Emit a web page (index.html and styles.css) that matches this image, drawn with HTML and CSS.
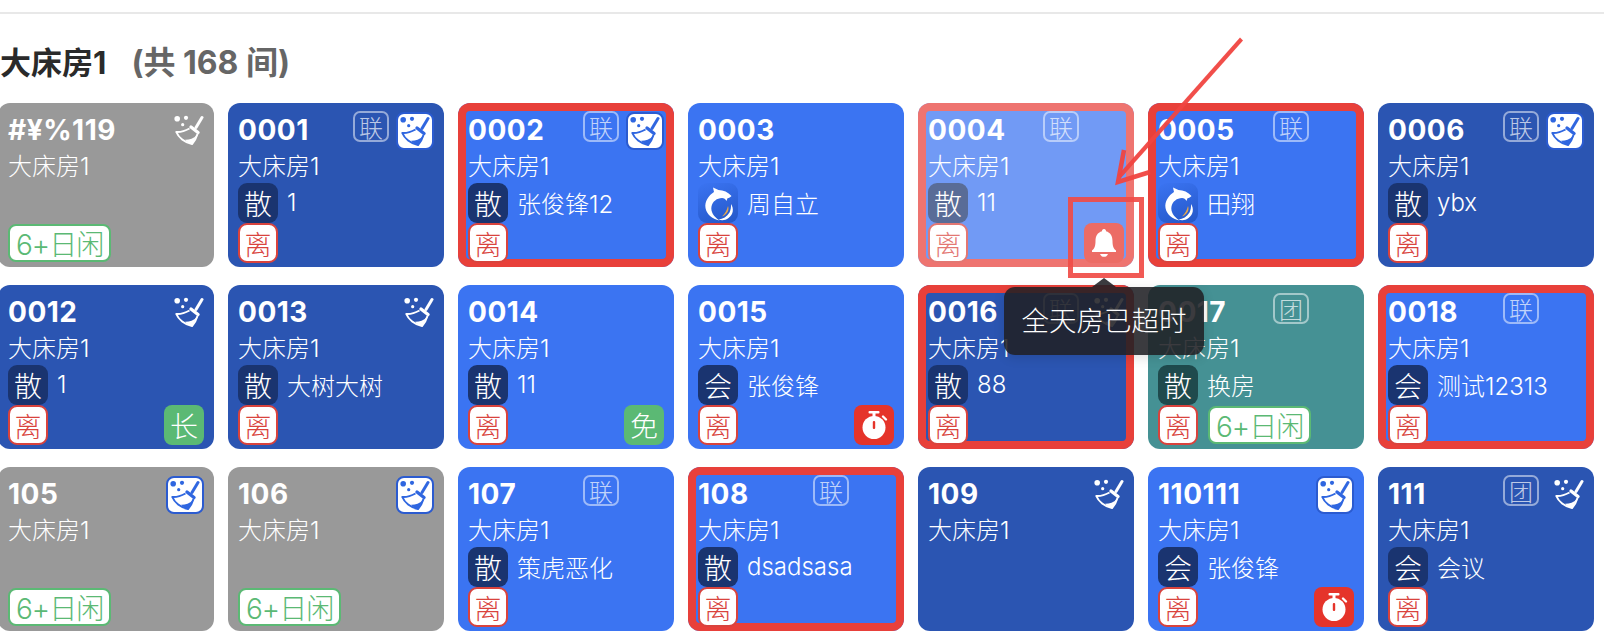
FILE: index.html
```html
<!DOCTYPE html>
<html lang="zh-CN">
<head>
    <meta charset="UTF-8">
    <meta name="viewport" content="width=device-width, initial-scale=1.0">
    <title>房态</title>
    <link rel="stylesheet" href="styles.css">
</head>
<body>
<svg class="defs" width="0" height="0">
    <symbol id="broom" viewBox="0 0 30 30">
        <circle cx="3.200" cy="3.800" r="2.800" fill="currentColor"/>
        <circle cx="12" cy="2.800" r="2.100" fill="currentColor"/>
        <circle cx="8.700" cy="9.700" r="1.600" fill="currentColor"/>
        <path d="M28 2.500 L22 12.500" stroke="currentColor" stroke-width="3" stroke-linecap="round" fill="none"/>
        <path d="M17 12 L24 17.500" stroke="currentColor" stroke-width="3.400" stroke-linecap="round" fill="none"/>
        <path d="M15.500 13.500 C11 16 6.500 17.300 2.300 17 C4.500 22.500 10.500 27.500 18 29 C20.500 26 22.500 22.500 23.500 19" stroke="currentColor" stroke-width="2" stroke-linejoin="round" fill="none"/>
        <path d="M11 24.800 C15 25 19.500 23.500 23 20 L18 29 C15.500 28.400 13 27 11 24.800 Z" fill="currentColor"/>
    </symbol>
    <symbol id="dolphin" viewBox="0 0 40 40">
        <path d="M33.500 13 C30 9 25.500 7 20.500 7 L15 4.500 L16 9 C10.500 12.500 6.500 18.500 7.500 25 C8.500 31 14 36 21.500 37.500 C15.500 33.500 12.500 28.500 13.500 23.500 C14.500 18.500 19 15 24 15 C26 15 27.500 16 28.500 18 L29.500 15.300 C31 15 32.500 14.200 33.500 13 Z" fill="#fff"/>
        <path d="M33 21 C36 25.500 35.500 31.500 30.500 35 C27.500 37.300 24 37.800 20.500 36.500 C25 36 29 33.800 31.500 29.500 C32.700 27 33.200 24 33 21 Z" fill="#fff"/>
        <path d="M30 23 C31.500 27 29.500 31.500 24 33.500 C27 30.500 29 27 30 23 Z" fill="#e8a84a"/>
    </symbol>
    <symbol id="bell" viewBox="0 0 40 40">
        <path d="M20 6 C18.500 6 18 7 18 8.200 C13.500 9.500 11.500 13 11.500 18 C11.500 23 10.500 25.500 8 27.500 V29 H32 V27.500 C29.500 25.500 28.500 23 28.500 18 C28.500 13 26.500 9.500 22 8.200 C22 7 21.500 6 20 6 Z" fill="#fff"/>
        <path d="M16 31 H24 C23 33 22 33.800 20 33.800 C18 33.800 17 33 16 31 Z" fill="#fff"/>
    </symbol>
    <symbol id="timer" viewBox="0 0 40 40">
        <rect x="14.500" y="6" width="11" height="2.400" rx="1" fill="#fff"/>
        <rect x="18.500" y="8" width="3" height="4" fill="#fff"/>
        <path d="M29 11.500 L32 14.500" stroke="#fff" stroke-width="2.400" stroke-linecap="round"/>
        <circle cx="20" cy="22.500" r="11.500" fill="#fff"/>
        <rect x="18.800" y="16" width="2.400" height="8" rx="1" fill="#e5342a"/>
    </symbol>
</svg>

<div class="page">
    <div class="top-line"></div>
    <h2 class="group-title">大床房1<span class="group-count">(共 168 间)</span></h2>

    <div class="room-grid">
        <!-- 第一排 -->
        <div class="room gray">
            <div class="room-head"><span class="room-no">#¥%119</span><span class="link-slot"></span><span class="clean-slot"><svg class="broom"><use href="#broom"/></svg></span></div>
            <div class="room-type">大床房1</div>
            <div class="guest-row"></div>
            <div class="tag-row"><span class="idle-tag">6+日闲</span></div>
        </div>
        <div class="room dark">
            <div class="room-head"><span class="room-no">0001</span><span class="link-slot"><span class="link-tag">联</span></span><span class="clean-slot"><span class="clean-box"><svg class="broom"><use href="#broom"/></svg></span></span></div>
            <div class="room-type">大床房1</div>
            <div class="guest-row"><span class="src-tag">散</span><span class="guest">1</span></div>
            <div class="tag-row"><span class="out-tag">离</span></div>
        </div>
        <div class="room blue alert">
            <div class="room-head"><span class="room-no">0002</span><span class="link-slot"><span class="link-tag">联</span></span><span class="clean-slot"><span class="clean-box"><svg class="broom"><use href="#broom"/></svg></span></span></div>
            <div class="room-type">大床房1</div>
            <div class="guest-row"><span class="src-tag">散</span><span class="guest">张俊锋12</span></div>
            <div class="tag-row"><span class="out-tag">离</span></div>
        </div>
        <div class="room blue">
            <div class="room-head"><span class="room-no">0003</span><span class="link-slot"></span><span class="clean-slot"></span></div>
            <div class="room-type">大床房1</div>
            <div class="guest-row"><span class="logo-tag"><svg><use href="#dolphin"/></svg></span><span class="guest">周自立</span></div>
            <div class="tag-row"><span class="out-tag">离</span></div>
        </div>
        <div class="room blue alert faded">
            <div class="room-head"><span class="room-no">0004</span><span class="link-slot"><span class="link-tag">联</span></span><span class="clean-slot"></span></div>
            <div class="room-type">大床房1</div>
            <div class="guest-row"><span class="src-tag">散</span><span class="guest">11</span></div>
            <div class="tag-row"><span class="out-tag">离</span><span class="end-tag red-tag"><svg><use href="#bell"/></svg></span></div>
        </div>
        <div class="room blue alert">
            <div class="room-head"><span class="room-no">0005</span><span class="link-slot"><span class="link-tag">联</span></span><span class="clean-slot"></span></div>
            <div class="room-type">大床房1</div>
            <div class="guest-row"><span class="logo-tag"><svg><use href="#dolphin"/></svg></span><span class="guest">田翔</span></div>
            <div class="tag-row"><span class="out-tag">离</span></div>
        </div>
        <div class="room dark">
            <div class="room-head"><span class="room-no">0006</span><span class="link-slot"><span class="link-tag">联</span></span><span class="clean-slot"><span class="clean-box"><svg class="broom"><use href="#broom"/></svg></span></span></div>
            <div class="room-type">大床房1</div>
            <div class="guest-row"><span class="src-tag">散</span><span class="guest">ybx</span></div>
            <div class="tag-row"><span class="out-tag">离</span></div>
        </div>

        <!-- 第二排 -->
        <div class="room dark">
            <div class="room-head"><span class="room-no">0012</span><span class="link-slot"></span><span class="clean-slot"><svg class="broom"><use href="#broom"/></svg></span></div>
            <div class="room-type">大床房1</div>
            <div class="guest-row"><span class="src-tag">散</span><span class="guest">1</span></div>
            <div class="tag-row"><span class="out-tag">离</span><span class="end-tag green-tag">长</span></div>
        </div>
        <div class="room dark">
            <div class="room-head"><span class="room-no">0013</span><span class="link-slot"></span><span class="clean-slot"><svg class="broom"><use href="#broom"/></svg></span></div>
            <div class="room-type">大床房1</div>
            <div class="guest-row"><span class="src-tag">散</span><span class="guest">大树大树</span></div>
            <div class="tag-row"><span class="out-tag">离</span></div>
        </div>
        <div class="room blue">
            <div class="room-head"><span class="room-no">0014</span><span class="link-slot"></span><span class="clean-slot"></span></div>
            <div class="room-type">大床房1</div>
            <div class="guest-row"><span class="src-tag">散</span><span class="guest">11</span></div>
            <div class="tag-row"><span class="out-tag">离</span><span class="end-tag green-tag">免</span></div>
        </div>
        <div class="room blue">
            <div class="room-head"><span class="room-no">0015</span><span class="link-slot"></span><span class="clean-slot"></span></div>
            <div class="room-type">大床房1</div>
            <div class="guest-row"><span class="src-tag">会</span><span class="guest">张俊锋</span></div>
            <div class="tag-row"><span class="out-tag">离</span><span class="end-tag red-tag"><svg><use href="#timer"/></svg></span></div>
        </div>
        <div class="room dark alert">
            <div class="room-head"><span class="room-no">0016</span><span class="link-slot"><span class="link-tag">联</span></span><span class="clean-slot"><svg class="broom"><use href="#broom"/></svg></span></div>
            <div class="room-type">大床房1</div>
            <div class="guest-row"><span class="src-tag">散</span><span class="guest">88</span></div>
            <div class="tag-row"><span class="out-tag">离</span></div>
        </div>
        <div class="room teal">
            <div class="room-head"><span class="room-no">0017</span><span class="link-slot"><span class="link-tag">团</span></span><span class="clean-slot"></span></div>
            <div class="room-type">大床房1</div>
            <div class="guest-row"><span class="src-tag">散</span><span class="guest">换房</span></div>
            <div class="tag-row"><span class="out-tag">离</span><span class="idle-tag">6+日闲</span></div>
        </div>
        <div class="room blue alert">
            <div class="room-head"><span class="room-no">0018</span><span class="link-slot"><span class="link-tag">联</span></span><span class="clean-slot"></span></div>
            <div class="room-type">大床房1</div>
            <div class="guest-row"><span class="src-tag">会</span><span class="guest">测试12313</span></div>
            <div class="tag-row"><span class="out-tag">离</span></div>
        </div>

        <!-- 第三排 -->
        <div class="room gray">
            <div class="room-head"><span class="room-no">105</span><span class="link-slot"></span><span class="clean-slot"><span class="clean-box"><svg class="broom"><use href="#broom"/></svg></span></span></div>
            <div class="room-type">大床房1</div>
            <div class="guest-row"></div>
            <div class="tag-row"><span class="idle-tag">6+日闲</span></div>
        </div>
        <div class="room gray">
            <div class="room-head"><span class="room-no">106</span><span class="link-slot"></span><span class="clean-slot"><span class="clean-box"><svg class="broom"><use href="#broom"/></svg></span></span></div>
            <div class="room-type">大床房1</div>
            <div class="guest-row"></div>
            <div class="tag-row"><span class="idle-tag">6+日闲</span></div>
        </div>
        <div class="room blue">
            <div class="room-head"><span class="room-no">107</span><span class="link-slot"><span class="link-tag">联</span></span><span class="clean-slot"></span></div>
            <div class="room-type">大床房1</div>
            <div class="guest-row"><span class="src-tag">散</span><span class="guest">策虎恶化</span></div>
            <div class="tag-row"><span class="out-tag">离</span></div>
        </div>
        <div class="room blue alert">
            <div class="room-head"><span class="room-no">108</span><span class="link-slot"><span class="link-tag">联</span></span><span class="clean-slot"></span></div>
            <div class="room-type">大床房1</div>
            <div class="guest-row"><span class="src-tag">散</span><span class="guest">dsadsasa</span></div>
            <div class="tag-row"><span class="out-tag">离</span></div>
        </div>
        <div class="room dark">
            <div class="room-head"><span class="room-no">109</span><span class="link-slot"></span><span class="clean-slot"><svg class="broom"><use href="#broom"/></svg></span></div>
            <div class="room-type">大床房1</div>
            <div class="guest-row"></div>
            <div class="tag-row"></div>
        </div>
        <div class="room blue">
            <div class="room-head"><span class="room-no">110111</span><span class="link-slot"></span><span class="clean-slot"><span class="clean-box"><svg class="broom"><use href="#broom"/></svg></span></span></div>
            <div class="room-type">大床房1</div>
            <div class="guest-row"><span class="src-tag">会</span><span class="guest">张俊锋</span></div>
            <div class="tag-row"><span class="out-tag">离</span><span class="end-tag red-tag"><svg><use href="#timer"/></svg></span></div>
        </div>
        <div class="room dark">
            <div class="room-head"><span class="room-no">111</span><span class="link-slot"><span class="link-tag">团</span></span><span class="clean-slot"><svg class="broom"><use href="#broom"/></svg></span></div>
            <div class="room-type">大床房1</div>
            <div class="guest-row"><span class="src-tag">会</span><span class="guest">会议</span></div>
            <div class="tag-row"><span class="out-tag">离</span></div>
        </div>
    </div>

    <!-- 悬浮提示 -->
    <div class="tooltip">全天房已超时</div>

    <!-- 截图上的红色标注 -->
    <svg class="markup" width="1604" height="640" viewBox="0 0 1604 640">
        <rect x="1070.500" y="199.500" width="71" height="76" fill="none" stroke="#f04c47" stroke-width="5" opacity="0.92"/>
        <path d="M1240 37.500 L1243 40.500 L1121 178 L1118 175 Z" fill="#f04440" opacity="0.95"/>
        <path d="M1124 150 L1118 182 L1150 172" fill="none" stroke="#f04440" stroke-width="4.500" opacity="0.95"/>
    </svg>
</div>
</body>
</html>
```

FILE: styles.css
```css
* {
    box-sizing: border-box;
}

body {
    margin: 0;
    background-color: #fff;
    font-family: Inter, "Noto Sans CJK SC", sans-serif;
    overflow: hidden;
}

.defs {
    display: block;
}

.page {
    position: relative;
    width: 1604px;
    height: 640px;
    padding-top: 12px;
    overflow: hidden;
}

.top-line {
    height: 2px;
    background-color: #e8e8e8;
}

.group-title {
    margin: 29px 0 20px 0;
    height: 40px;
    font-size: 31px;
    line-height: 40px;
    font-weight: 700;
    color: #2a2a2a;
}

.group-count {
    margin-left: 25px;
    font-size: 32px;
    color: #666;
}

.room-grid {
    display: grid;
    grid-template-columns: repeat(7, 216px);
    grid-auto-rows: 164px;
    column-gap: 14px;
    row-gap: 18px;
    margin-left: -2px;
}

.room {
    padding: 8px 10px 4px;
    border-radius: 12px;
    color: #fff;
    display: flex;
    flex-direction: column;
}

.blue { background-color: #3b74f2; }
.dark { background-color: #2b55b2; }
.gray { background-color: #999; }
.teal { background-color: #459194; }

.alert {
    box-shadow: inset 0 0 0 8px #e8403a;
}

.faded {
    opacity: 0.72;
}

.room-head {
    display: flex;
    height: 38px;
    flex: none;
}

.room-no {
    flex: 1;
    font-size: 28px;
    font-weight: 700;
    line-height: 38px;
    letter-spacing: 0.5px;
    white-space: nowrap;
}

.link-slot {
    width: 36px;
    margin-right: 7px;
}

.link-tag {
    display: flex;
    width: 36px;
    height: 31px;
    align-items: center;
    justify-content: center;
    border: 2px solid rgba(255, 255, 255, 0.5);
    border-radius: 7px;
    font-size: 24px;
    font-weight: 300;
    color: rgba(255, 255, 255, 0.7);
}

.clean-slot {
    width: 38px;
    display: flex;
    align-items: center;
    justify-content: flex-end;
}

.broom {
    width: 30px;
    height: 30px;
    color: #fff;
}

.clean-box {
    display: flex;
    width: 38px;
    height: 38px;
    margin-top: 1px;
    align-items: center;
    justify-content: center;
    background-color: #fff;
    border: 2px solid #2b5bd0;
    border-radius: 8px;
}

.clean-box .broom {
    color: #2f66e0;
}

.room-type {
    height: 32px;
    font-size: 24px;
    font-weight: 300;
    line-height: 36px;
    flex: none;
}

.guest-row {
    display: flex;
    align-items: center;
    height: 40px;
    margin-top: 2px;
    flex: none;
}

.src-tag,
.logo-tag {
    display: flex;
    width: 40px;
    height: 40px;
    align-items: center;
    justify-content: center;
    border-radius: 9px;
    flex: none;
}

.src-tag {
    background-color: #1a3470;
    font-size: 28px;
    font-weight: 300;
}

.teal .src-tag {
    background-color: #1f4a4d;
}

.logo-tag {
    background: linear-gradient(160deg, #3b74f2, #2457c8);
}

.logo-tag svg,
.end-tag svg {
    width: 40px;
    height: 40px;
}

.guest {
    margin-left: 9px;
    padding-bottom: 2px;
    font-size: 24px;
    font-weight: 300;
    white-space: nowrap;
}

.tag-row {
    display: flex;
    align-items: center;
    gap: 10px;
    height: 40px;
}

.out-tag {
    display: flex;
    width: 40px;
    height: 40px;
    align-items: center;
    justify-content: center;
    background-color: #fff;
    border: 2px solid #d9433d;
    border-radius: 9px;
    font-size: 27px;
    font-weight: 300;
    color: #d9433d;
}

.idle-tag {
    display: flex;
    height: 38px;
    align-items: center;
    padding: 0 6px;
    background-color: #fff;
    border: 2px solid #5bb974;
    border-radius: 8px;
    font-size: 28px;
    font-weight: 300;
    letter-spacing: -1px;
    color: #5bb974;
}

.end-tag {
    display: flex;
    width: 40px;
    height: 40px;
    align-items: center;
    justify-content: center;
    margin-left: auto;
    border-radius: 8px;
    font-size: 28px;
    font-weight: 300;
}

.green-tag { background-color: #5bb974; }
.red-tag { background-color: #e5342a; }

.tooltip {
    position: absolute;
    left: 1004px;
    top: 287px;
    width: 200px;
    height: 68px;
    border-radius: 11px;
    background-color: rgba(32, 32, 36, 0.88);
    box-shadow: 0 3px 12px rgba(0, 0, 0, 0.12);
    color: #fff;
    font-size: 27.500px;
    font-weight: 300;
    line-height: 68px;
    text-align: center;
}

.tooltip::before {
    content: "";
    position: absolute;
    left: 88px;
    top: -9px;
    border-left: 12px solid transparent;
    border-right: 12px solid transparent;
    border-bottom: 9px solid rgba(32, 32, 36, 0.88);
}

.markup {
    position: absolute;
    left: 0;
    top: 0;
    pointer-events: none;
}
```
